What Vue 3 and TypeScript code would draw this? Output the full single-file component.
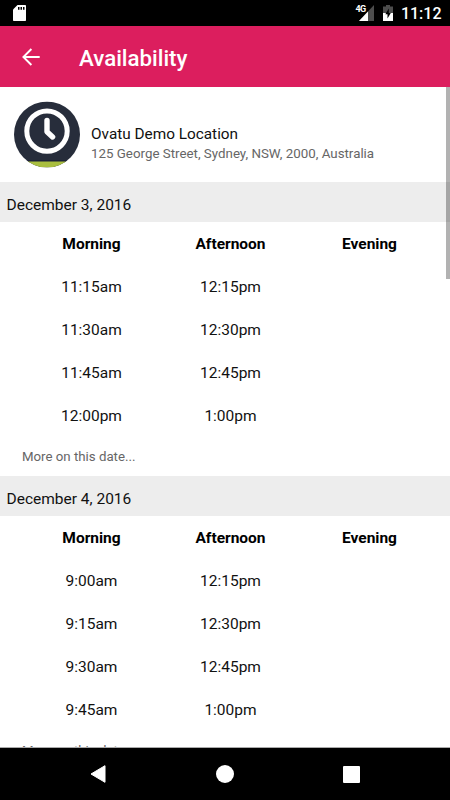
<script setup lang="ts">
interface DayAvailability {
  date: string
  slots: [string, string, string][]
}

const periods: string[] = ['Morning', 'Afternoon', 'Evening']

const days: DayAvailability[] = [
  {
    date: 'December 3, 2016',
    slots: [
      ['11:15am', '12:15pm', ''],
      ['11:30am', '12:30pm', ''],
      ['11:45am', '12:45pm', ''],
      ['12:00pm', '1:00pm', ''],
    ],
  },
  {
    date: 'December 4, 2016',
    slots: [
      ['9:00am', '12:15pm', ''],
      ['9:15am', '12:30pm', ''],
      ['9:30am', '12:45pm', ''],
      ['9:45am', '1:00pm', ''],
    ],
  },
]
</script>

<template>
  <div class="screen">
    <div class="status">
      <svg class="sd" viewBox="0 0 13 16" width="13" height="16">
        <path fill="#fff" d="M4.500 0h7.700q.8 0 .8.8v14.400q0 .8-.8.8H.8q-.8 0-.8-.8V4.500z" />
        <path fill="#000" d="M5 2h1.500v2.800H5zM7.500 2H9v2.800H7.500zM10 2h1.500v2.800H10z" />
      </svg>
      <div class="status-right">
        <span class="network">4G</span>
        <svg class="signal" viewBox="0 0 15 16" width="15" height="16">
          <path fill="#4d4d4d" d="M15 0v16H0z" />
          <path fill="#fff" d="M9 6.400V16H0z" />
        </svg>
        <svg class="battery" viewBox="0 0 10 16" width="10" height="16">
          <path fill="#4d4d4d" d="M3 0h4v1.500h3V8H0V1.500h3z" />
          <path fill="#fff" d="M0 8h10v8H0z" />
          <path fill="#000" d="M5.800 3.500V8h2L4.500 13.500V9.300H2.300z" />
        </svg>
        <span class="clock">11:12</span>
      </div>
    </div>

    <header class="toolbar">
      <svg class="back" viewBox="0 0 18 18" width="18" height="18" fill="none" stroke="#fff" stroke-width="1.900">
        <path d="M17.700 9H1.500M9.400 1L1.400 9l8 8" />
      </svg>
      <h1 class="title">Availability</h1>
    </header>

    <main class="content">
      <section class="location">
        <svg class="logo" viewBox="0 0 66 67" width="66" height="67">
          <defs>
            <clipPath id="avatar"><circle cx="33" cy="33" r="33" /></clipPath>
          </defs>
          <g transform="translate(0 .4)">
            <g clip-path="url(#avatar)">
              <path fill="#272d3b" d="M0 0h66v66H0z" />
              <path fill="#1a1f38" d="M0 58.800h66v1.500H0z" />
              <path fill="#a9be3f" d="M0 60.200h66V66H0z" />
            </g>
            <circle cx="33" cy="29.700" r="20.200" fill="none" stroke="#fff" stroke-width="5" />
            <path d="M33 19v11.300l5.600 5.200" fill="none" stroke="#fff" stroke-width="5.400" stroke-linecap="round" stroke-linejoin="round" />
          </g>
        </svg>
        <div class="details">
          <div class="name">Ovatu Demo Location</div>
          <div class="address">125 George Street, Sydney, NSW, 2000, Australia</div>
        </div>
      </section>

      <section v-for="day in days" :key="day.date" class="day">
        <h2 class="date">{{ day.date }}</h2>
        <div class="grid">
          <div v-for="period in periods" :key="period" class="period">{{ period }}</div>
          <template v-for="(row, r) in day.slots" :key="r">
            <div v-for="(slot, c) in row" :key="c" class="slot">{{ slot }}</div>
          </template>
        </div>
        <div class="more">More on this date...</div>
      </section>
      <div class="scrollbar"></div>
    </main>

    <nav class="navbar">
      <svg viewBox="0 0 17 20" width="17" height="20">
        <path fill="#fff" stroke="#fff" stroke-linejoin="round" d="M1 10L15 1.700v16.600z" />
      </svg>
      <svg viewBox="0 0 18 18" width="18" height="18"><circle cx="9" cy="9" r="9" fill="#fff" /></svg>
      <svg viewBox="0 0 17 17" width="17" height="17"><rect width="17" height="17" rx="1" fill="#fff" /></svg>
    </nav>
  </div>
</template>

<style>
body {
  margin: 0;
  overflow: hidden;
}
</style>

<style scoped>
.screen {
  width: 450px;
  height: 800px;
  display: flex;
  flex-direction: column;
  overflow: hidden;
  background: #fff;
  color: #111;
  font-family: Roboto, "Liberation Sans", sans-serif;
}
.status {
  height: 26px;
  flex: none;
  box-sizing: border-box;
  display: flex;
  justify-content: space-between;
  padding: 5px 8.500px 0 13px;
  background: #000;
  color: #fff;
}
.status-right {
  display: flex;
  align-items: flex-start;
}
.network {
  font-size: 9px;
  line-height: 9px;
  font-weight: 700;
  letter-spacing: -0.700px;
  margin-right: -6px;
}
.signal {
  margin-right: 9px;
}
.battery {
  margin-right: 7.500px;
}
.clock {
  margin-top: -1px;
  font-size: 16px;
  line-height: 19px;
  font-weight: 500;
}
.toolbar {
  height: 61px;
  flex: none;
  display: flex;
  align-items: center;
  background: #dc1e5e;
  color: #fff;
  box-sizing: border-box;
  padding: 0 0 0 22px;
}
.title {
  margin: 2px 0 0 39px;
  font-size: 22.300px;
  line-height: 26px;
  font-weight: 500;
}
.content {
  flex: 1;
  min-height: 0;
  position: relative;
  overflow: hidden;
}
.location {
  height: 95px;
  box-sizing: border-box;
  display: flex;
  padding: 14px 0 0 14px;
}
.logo {
  flex: none;
}
.details {
  margin: 23px 0 0 11px;
}
.name {
  font-size: 15.350px;
  line-height: 20px;
}
.address {
  font-size: 13.330px;
  line-height: 19px;
  color: #666;
}
.date {
  height: 40px;
  margin: 0;
  box-sizing: border-box;
  padding: 7px 6.500px 0;
  background: #ededed;
  font-size: 15.500px;
  line-height: 33px;
  font-weight: 400;
}
.grid {
  display: grid;
  grid-template-columns: repeat(3, 139px);
  grid-auto-rows: 43px;
  padding: 1px 0 0 22px;
  text-align: center;
  line-height: 43px;
  font-size: 15.500px;
}
.period {
  font-weight: 700;
  color: #000;
}
.more {
  height: 38px;
  padding-left: 22px;
  font-size: 13.250px;
  line-height: 38px;
  color: #666;
}
.scrollbar {
  position: absolute;
  top: 0;
  right: 0;
  width: 4.500px;
  height: 192px;
  background: rgba(0, 0, 0, 0.3);
}
.navbar {
  height: 53px;
  flex: none;
  box-sizing: border-box;
  display: flex;
  align-items: center;
  justify-content: space-between;
  padding: 0 90px;
  border-top: 1px solid #aaa;
  background: #000;
}
</style>
